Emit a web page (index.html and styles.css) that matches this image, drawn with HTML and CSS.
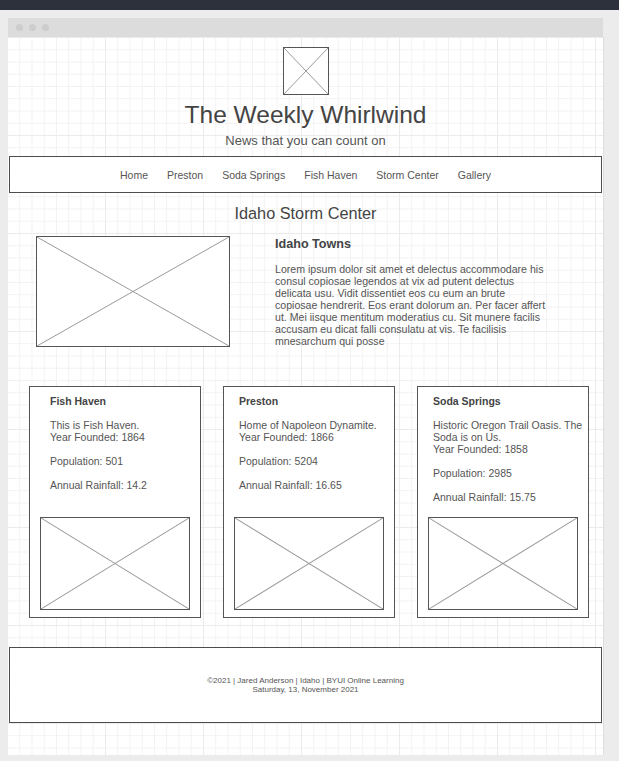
FILE: index.html
```html
<!DOCTYPE html>
<html>
	<head>
		<meta charset="UTF-8">
		<title>The Weekly Whirlwind</title>
		<link rel="stylesheet" href="styles.css">
	</head>
	<body>
		<div class="topbar"></div>
		<div class="window">
			<div class="titlebar">
				<span class="dot"></span>
				<span class="dot"></span>
				<span class="dot"></span>
			</div>
			<div class="page">
				<header class="header">
					<div class="ph logo">
						<svg viewBox="0 0 100 100" preserveAspectRatio="none"><line x1="0" y1="0" x2="100" y2="100"/><line x1="100" y1="0" x2="0" y2="100"/></svg>
					</div>
					<h1>The Weekly Whirlwind</h1>
					<p class="tagline">News that you can count on</p>
				</header>
				<nav class="nav">
					<a href="#">Home</a>
					<a href="#">Preston</a>
					<a href="#">Soda Springs</a>
					<a href="#">Fish Haven</a>
					<a href="#">Storm Center</a>
					<a href="#">Gallery</a>
				</nav>
				<h2 class="page-title">Idaho Storm Center</h2>
				<section class="intro">
					<div class="ph hero">
						<svg viewBox="0 0 100 100" preserveAspectRatio="none"><line x1="0" y1="0" x2="100" y2="100"/><line x1="100" y1="0" x2="0" y2="100"/></svg>
					</div>
					<div class="intro-text">
						<h3>Idaho Towns</h3>
						<p>Lorem ipsum dolor sit amet et delectus accommodare his<br>
						consul copiosae legendos at vix ad putent delectus<br>
						delicata usu. Vidit dissentiet eos cu eum an brute<br>
						copiosae hendrerit. Eos erant dolorum an. Per facer affert<br>
						ut. Mei iisque mentitum moderatius cu. Sit munere facilis<br>
						accusam eu dicat falli consulatu at vis. Te facilisis<br>
						mnesarchum qui posse</p>
					</div>
				</section>
				<section class="cards">
					<div class="card card-wide">
						<h4>Fish Haven</h4>
						<p>This is Fish Haven.<br>Year Founded: 1864<br><br>Population: 501<br><br>Annual Rainfall: 14.2</p>
						<div class="ph card-img">
							<svg viewBox="0 0 100 100" preserveAspectRatio="none"><line x1="0" y1="0" x2="100" y2="100"/><line x1="100" y1="0" x2="0" y2="100"/></svg>
						</div>
					</div>
					<div class="card">
						<h4>Preston</h4>
						<p>Home of Napoleon Dynamite.<br>Year Founded: 1866<br><br>Population: 5204<br><br>Annual Rainfall: 16.65</p>
						<div class="ph card-img">
							<svg viewBox="0 0 100 100" preserveAspectRatio="none"><line x1="0" y1="0" x2="100" y2="100"/><line x1="100" y1="0" x2="0" y2="100"/></svg>
						</div>
					</div>
					<div class="card">
						<h4>Soda Springs</h4>
						<p>Historic Oregon Trail Oasis. The Soda is on Us.<br>Year Founded: 1858<br><br>Population: 2985<br><br>Annual Rainfall: 15.75</p>
						<div class="ph card-img">
							<svg viewBox="0 0 100 100" preserveAspectRatio="none"><line x1="0" y1="0" x2="100" y2="100"/><line x1="100" y1="0" x2="0" y2="100"/></svg>
						</div>
					</div>
				</section>
				<footer class="footer">
					<p>&copy;2021 | Jared Anderson | Idaho | BYUI Online Learning</p>
					<p>Saturday, 13, November 2021</p>
				</footer>
			</div>
		</div>
	</body>
</html>
```

FILE: styles.css
```css
	body{
		margin: 0;
		background-color: #ececec;
		font-family: "Liberation Sans", Arial, sans-serif;
		color: #555;
	}
	.topbar{
		height: 10px;
		background-color: #2c313c;
	}
	.window{
		margin: 8px 0 0 8px;
		width: 595px;
	}
	.titlebar{
		display: flex;
		align-items: center;
		gap: 6px;
		height: 19px;
		padding-left: 8px;
		background-color: #dcdcdc;
	}
	.dot{
		width: 7px;
		height: 7px;
		border-radius: 50%;
		background-color: #cdcdcd;
	}
	.page{
		padding: 10px 1px 32px;
		background-color: #fff;
		background-image:
			linear-gradient(to right, #ebebeb 1px, transparent 1px),
			linear-gradient(to bottom, #ebebeb 1px, transparent 1px),
			linear-gradient(to right, #f2f2f2 1px, transparent 1px),
			linear-gradient(to bottom, #f2f2f2 1px, transparent 1px);
		background-size: 98px 98px, 98px 98px, 12.25px 12.25px, 12.25px 12.25px;
		background-position: -1px 0;
		box-shadow: 1px 0 0 #dedede;
	}

	/* wireframe placeholder box */
	.ph{
		box-sizing: border-box;
		border: 1px solid #555;
		background-color: #fff;
	}
	.ph svg{
		display: block;
		width: 100%;
		height: 100%;
	}
	.ph line{
		stroke: #999;
		stroke-width: 1;
		vector-effect: non-scaling-stroke;
	}

	.header{
		display: flex;
		flex-direction: column;
		align-items: center;
	}
	.logo{
		width: 46px;
		height: 48px;
	}
	h1{
		margin: 6px 0 0;
		font-size: 24.5px;
		line-height: 28px;
		font-weight: normal;
		color: #444;
	}
	.tagline{
		margin: 4px 0 0;
		font-size: 13px;
		line-height: 16px;
	}
	.nav{
		display: flex;
		justify-content: center;
		align-items: center;
		gap: 19px;
		height: 37px;
		box-sizing: border-box;
		margin-top: 7px;
		border: 1px solid #4d4d4d;
		background-color: #fff;
	}
	.nav a{
		font-size: 10.5px;
		color: #555;
		text-decoration: none;
	}
	.page-title{
		margin: 10px 0 0;
		text-align: center;
		font-size: 16.3px;
		line-height: 20px;
		font-weight: normal;
		color: #444;
	}
	.intro{
		display: flex;
		gap: 45px;
		margin-top: 13px;
		padding-left: 27px;
	}
	.hero{
		width: 194px;
		height: 111px;
	}
	.intro-text{
		width: 290px;
	}
	.intro-text h3{
		margin: 0;
		font-size: 12.6px;
		line-height: 16px;
		color: #444;
	}
	.intro-text p{
		margin: 11px 0 0;
		font-size: 10.6px;
		line-height: 12px;
		white-space: nowrap;
	}
	.cards{
		display: flex;
		gap: 22px;
		margin-top: 39px;
		padding-left: 20px;
	}
	.card{
		display: flex;
		flex-direction: column;
		box-sizing: border-box;
		width: 172px;
		height: 232px;
		padding: 8px 3px 7px 15px;
		border: 1px solid #555;
		background-color: #fff;
	}
	.card-wide{
		padding-left: 20px;
	}
	.card h4{
		margin: 0;
		font-size: 10.5px;
		line-height: 12px;
		color: #444;
	}
	.card p{
		margin: 12px 0 0;
		font-size: 10.5px;
		line-height: 12px;
	}
	.card-img{
		width: 150px;
		height: 93px;
		margin: auto 0 0 -5px;
	}
	.card-wide .card-img{
		margin-left: -10px;
	}
	.footer{
		display: flex;
		flex-direction: column;
		justify-content: center;
		align-items: center;
		height: 76px;
		box-sizing: border-box;
		margin-top: 29px;
		border: 1px solid #4d4d4d;
		background-color: #fff;
	}
	.footer p{
		margin: 0;
		font-size: 8px;
		line-height: 9.5px;
	}
```
